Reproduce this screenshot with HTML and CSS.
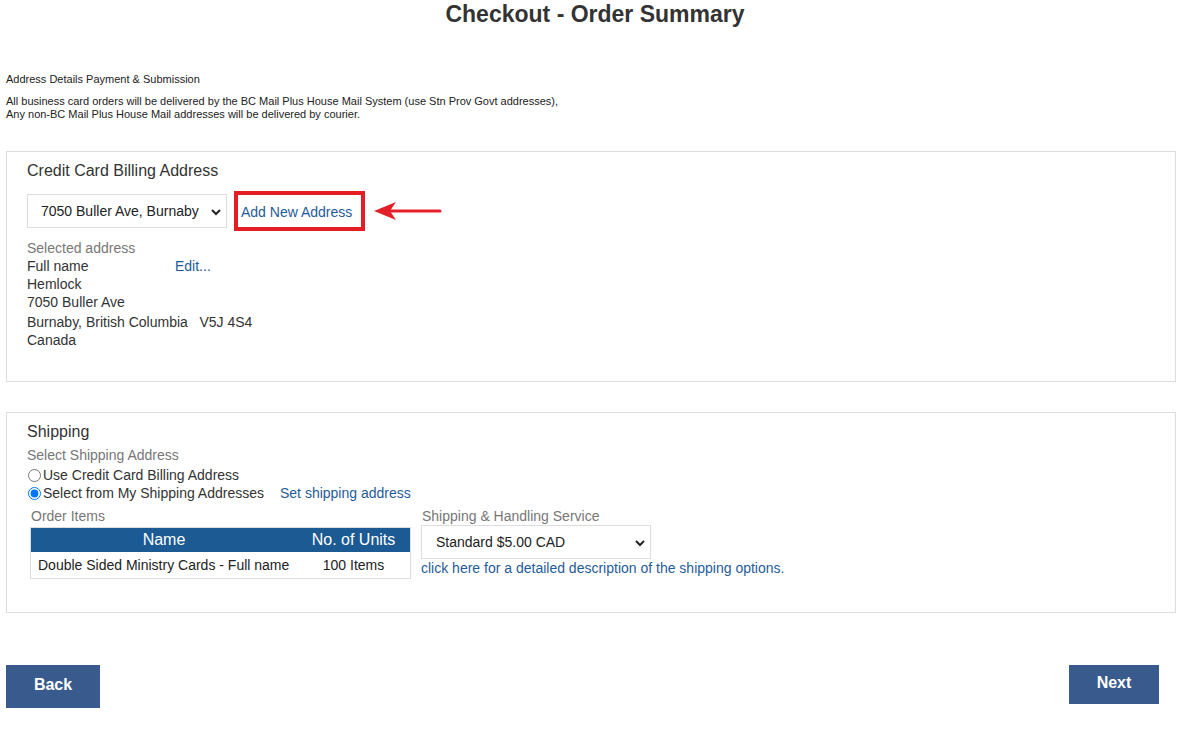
FILE: index.html
```html
<!DOCTYPE html>
<html>
<head>
  <title>Checkout - Order Summary</title>
  <link rel="stylesheet" href="styles.css">
</head>
<body>
  <h1 class="pageTitle">Checkout - Order Summary</h1>

  <div class="steps">Address Details Payment &amp; Submission</div>
  <p class="notice">All business card orders will be delivered by the BC Mail Plus House Mail System (use Stn Prov Govt addresses),<br>
  Any non-BC Mail Plus House Mail addresses will be delivered by courier.</p>

  <div class="panel billing">
    <div class="panelTitle">Credit Card Billing Address</div>
    <div class="addrRow">
      <div class="selectWrap addrSelect">
        <select><option>7050 Buller Ave, Burnaby</option></select>
        <svg class="chev" width="10" height="8" viewBox="0 0 10 8"><path d="M1 2 L5 6 L9 2" fill="none" stroke="#222" stroke-width="2"/></svg>
      </div>
      <div class="highlight"><a href="#">Add New Address</a></div>
      <svg class="arrow" width="70" height="22" viewBox="0 0 70 22">
        <line x1="14" y1="11" x2="67" y2="11" stroke="#e3202a" stroke-width="3" stroke-linecap="round"/>
        <polygon points="1,11 23,2 17,11 23,20" fill="#e3202a"/>
      </svg>
    </div>
    <div class="label">Selected address</div>
    <div class="addrLine"><span class="nameCol">Full name</span><a href="#">Edit...</a></div>
    <div class="addrLine">Hemlock</div>
    <div class="addrLine">7050 Buller Ave</div>
    <div class="addrLine city">Burnaby, British Columbia &nbsp;&nbsp;V5J 4S4</div>
    <div class="addrLine">Canada</div>
  </div>

  <div class="panel shipping">
    <div class="panelTitle">Shipping</div>
    <div class="label shipLabel">Select Shipping Address</div>
    <label class="radioLine first"><input type="radio" name="ship">Use Credit Card Billing Address</label>
    <div class="radioLine"><label><input type="radio" name="ship" checked>Select from My Shipping Addresses</label><a href="#" class="setAddr">Set shipping address</a></div>
    <div class="shipCols">
      <div class="itemsCol">
        <div class="label">Order Items</div>
        <table class="items">
          <tr><th class="nameTh">Name</th><th>No. of Units</th></tr>
          <tr><td>Double Sided Ministry Cards - Full name</td><td class="units">100 Items</td></tr>
        </table>
      </div>
      <div class="serviceCol">
        <div class="label">Shipping &amp; Handling Service</div>
        <div class="selectWrap serviceSelect">
          <select><option>Standard $5.00 CAD</option></select>
          <svg class="chev" width="10" height="8" viewBox="0 0 10 8"><path d="M1 2 L5 6 L9 2" fill="none" stroke="#222" stroke-width="2"/></svg>
        </div>
        <a href="#" class="descLink">click here for a detailed description of the shipping options.</a>
      </div>
    </div>
  </div>

  <div class="buttons">
    <button class="btn back">Back</button>
    <button class="btn next">Next</button>
  </div>
</body>
</html>
```

FILE: styles.css
```css
body {
    margin: 0;
    padding: 0 8px 0 6px;
    font-family: "Liberation Sans", Arial, sans-serif;
    color: #333;
    font-size: 14px;
}

a {
    color: #1f5c99;
    text-decoration: none;
}

h1.pageTitle {
    margin: 0;
    padding-left: 8px;
    font-size: 23px;
    line-height: 28px;
    text-align: center;
    color: #333;
}

.steps {
    margin-top: 45px;
    font-size: 11px;
    line-height: 13px;
    color: #222;
}

.notice {
    margin: 9px 0 0 0;
    font-size: 11px;
    line-height: 13px;
    color: #222;
}

.panel {
    border: 1px solid #ddd;
    padding: 9px 20px 0 20px;
    margin-top: 30px;
}
.panel.billing {
    height: 220px;
}
.panel.shipping {
    height: 190px;
}

.panelTitle {
    font-size: 16px;
    line-height: 20px;
    color: #333;
}

.label {
    color: #777;
    line-height: 18px;
}
.shipLabel {
    margin-top: 4px;
}

.addrRow {
    display: flex;
    align-items: center;
    margin-top: 10px;
    margin-bottom: 8px;
}

.selectWrap {
    position: relative;
    box-sizing: border-box;
    border: 1px solid #ddd;
    background: #fff;
}
.selectWrap select {
    appearance: none;
    -webkit-appearance: none;
    border: none;
    background: transparent;
    font-family: inherit;
    font-size: 14px;
    color: #222;
    width: 100%;
    height: 100%;
    padding: 0 0 0 14px;
    outline: none;
}
.selectWrap .chev {
    position: absolute;
    right: 5px;
    top: 13px;
}
.addrSelect {
    width: 200px;
    height: 34px;
}
.addrSelect select {
    padding-left: 13px;
}

.highlight {
    box-sizing: border-box;
    width: 131px;
    height: 40px;
    border: 4px solid #e31e25;
    margin-left: 7px;
    padding: 1px 0 0 3px;
    line-height: 33px;
}

.arrow {
    margin-left: 8px;
}

.addrLine {
    line-height: 18px;
}
.addrLine.city {
    padding-top: 2px;
}
.nameCol {
    display: inline-block;
    width: 148px;
}

.radioLine {
    display: block;
    line-height: 18px;
}
.radioLine.first {
    margin-top: 2px;
}
.radioLine input {
    margin: 0 2px 0 1px;
    width: 13px;
    height: 13px;
    vertical-align: -2px;
}
.setAddr {
    margin-left: 16px;
}

.shipCols {
    display: flex;
    margin-top: 5px;
}
.itemsCol {
    margin-left: 3px;
    width: 381px;
}
.itemsCol .label {
    margin-left: 1px;
}
.serviceCol {
    margin-left: 10px;
}
.serviceCol .label {
    margin-left: 1px;
}

table.items {
    border-collapse: collapse;
    border: 1px solid #ddd;
    width: 381px;
    margin-top: 2px;
}
table.items th {
    background: #1c5a94;
    color: #fff;
    font-weight: normal;
    font-size: 16px;
    height: 24px;
    padding: 0;
}
table.items th.nameTh {
    width: 266px;
}
table.items td {
    height: 26px;
    padding: 0 0 0 7px;
    color: #222;
}
table.items td.units {
    text-align: center;
    padding: 0;
}

.serviceSelect {
    width: 230px;
    height: 34px;
}
.descLink {
    display: block;
    line-height: 18px;
}

.buttons {
    display: flex;
    justify-content: space-between;
    align-items: flex-start;
    margin-top: 52px;
}
.btn {
    border: none;
    background: #385a8c;
    color: #fff;
    font-family: inherit;
    font-weight: bold;
    font-size: 16px;
}
.btn.back {
    width: 94px;
    height: 43px;
    padding-bottom: 4px;
}
.btn.next {
    width: 90px;
    height: 39px;
    padding-bottom: 5px;
    margin-right: 17px;
}
```
